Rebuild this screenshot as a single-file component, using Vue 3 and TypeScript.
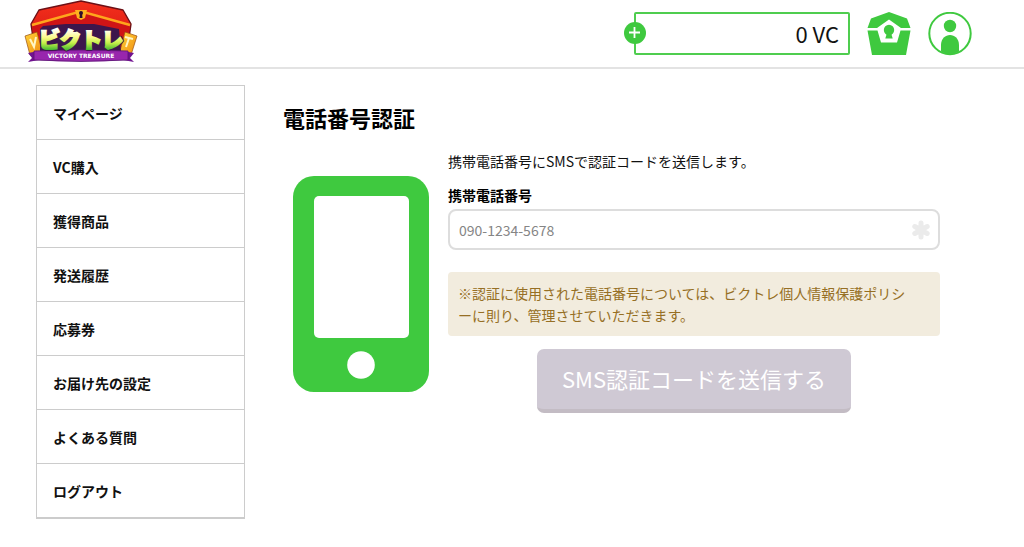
<script setup lang="ts">
import { ref } from 'vue'

interface MenuItem {
  label: string
  href: string
}

const menu: MenuItem[] = [
  { label: 'マイページ', href: '#mypage' },
  { label: 'VC購入', href: '#purchase' },
  { label: '獲得商品', href: '#items' },
  { label: '発送履歴', href: '#shipping' },
  { label: '応募券', href: '#tickets' },
  { label: 'お届け先の設定', href: '#address' },
  { label: 'よくある質問', href: '#faq' },
  { label: 'ログアウト', href: '#logout' },
]

const balance = ref<number>(0)
const phone = ref<string>('')
</script>

<template>
  <div class="app">
    <header class="header">
      <a class="logo" href="#top" aria-label="ビクトレ">
        <svg width="114" height="64" viewBox="0 0 114 64">
          <defs>
            <linearGradient id="lid" x1="0" y1="0" x2="0" y2="1">
              <stop offset="0" stop-color="#f5301c" />
              <stop offset="1" stop-color="#d01412" />
            </linearGradient>
            <linearGradient id="letters" gradientUnits="userSpaceOnUse" x1="0" y1="27" x2="0" y2="50">
              <stop offset="0.1" stop-color="#ffffff" />
              <stop offset="0.45" stop-color="#fbfa8a" />
              <stop offset="0.7" stop-color="#c2ee48" />
              <stop offset="1" stop-color="#45b832" />
            </linearGradient>
            <linearGradient id="card" x1="0" y1="0" x2="1" y2="1">
              <stop offset="0" stop-color="#ffd33a" />
              <stop offset="1" stop-color="#f08c10" />
            </linearGradient>
          </defs>
          <path d="M7 24 L15 10 L57 1 L99 10 L107 24 L103 52 L11 52 Z" fill="url(#lid)" stroke="#6d1016" stroke-width="1.4" stroke-linejoin="round" />
          <path d="M8 25 L50 12 L57 10 L64 12 L106 25 L103 52 L11 52 Z" fill="#cf1416" />
          <path d="M8 25 L51 13 L63 13 L106 25" fill="none" stroke="#ffa51c" stroke-width="2.4" />
          <path d="M51 10 H63 L61 18 L57 20 L53 18 Z" fill="#ffb21e" />
          <circle cx="57" cy="13" r="2" fill="#31102d" />
          <path d="M56 13 H58 L58.5 18 H55.5 Z" fill="#31102d" />
          <path d="M1 36 L13 32 L18 51 L6 55 Z" fill="url(#card)" stroke="#9a4e10" stroke-width="0.7" />
          <path d="M101 32 L113 36 L107 55 L96 51 Z" fill="url(#card)" stroke="#9a4e10" stroke-width="0.7" />
          <path d="M6 39 L10 47 L12 37" fill="none" stroke="#fff6c4" stroke-width="2" />
          <path d="M101 37 L109 39 M105 38 L102 47" fill="none" stroke="#fff6c4" stroke-width="2" />
          <path d="M16 29 L19 26 L42 24 H70 L95 29 L97 52 H16 Z" fill="#3d164c" />
          <path d="M4 53 L15 51 V60 L4 62 L8 58 Z M110 53 L99 51 V60 L110 62 L106 58 Z" fill="#711290" />
          <path d="M10 51 Q57 49 104 51 V60 Q57 63 10 60 Z" fill="#9826ad" stroke="#5a1474" stroke-width="0.8" />
          <text x="57" y="47" text-anchor="middle" class="logo-name logo-outline">ビクトレ</text>
          <text x="57" y="47" text-anchor="middle" class="logo-name logo-fill">ビクトレ</text>
          <text x="57" y="58" text-anchor="middle" class="logo-sub">VICTORY TREASURE</text>
        </svg>
      </a>
      <div class="tools">
        <div class="balance">
          <button class="plus" type="button" aria-label="VC購入">
            <svg width="22" height="22" viewBox="0 0 22 22">
              <circle cx="11" cy="11" r="11" fill="#3fc93f" />
              <path d="M5 10.500 H16 M10.500 5 V16" stroke="#fff" stroke-width="1.800" />
            </svg>
          </button>
          <span>{{ balance }} VC</span>
        </div>
        <a class="tool" href="#items" aria-label="獲得商品">
          <svg width="44" height="44" viewBox="0 0 44 44" fill="#3fc93f">
            <path d="M22 0 L40 6.5 L43.5 16 H34 L22 7.5 L10 16 H0.5 L4 6.5 Z" />
            <path d="M0.5 18.500 H10.500 L14 30.500 H30 L33.500 18.500 H43.500 L39 43 H5 Z" />
            <circle cx="22" cy="18" r="5.200" />
            <path d="M20 21 H24 L25.700 26.500 H18.300 Z" />
          </svg>
        </a>
        <a class="tool" href="#mypage" aria-label="マイページ">
          <svg width="44" height="44" viewBox="0 0 44 44" fill="#3fc93f">
            <circle cx="22" cy="21.500" r="20.700" fill="none" stroke="#3fc93f" stroke-width="2" />
            <circle cx="22" cy="14" r="6.200" />
            <path d="M13 39.500 V33 C13 19.500 31 19.500 31 33 V39.500 Q22 45 13 39.500 Z" />
          </svg>
        </a>
      </div>
    </header>

    <div class="page">
      <nav class="menu">
        <ul>
          <li v-for="item in menu" :key="item.href">
            <a :href="item.href">{{ item.label }}</a>
          </li>
        </ul>
      </nav>

      <main class="main">
        <h1>電話番号認証</h1>
        <div class="verify">
          <svg class="phone" width="136" height="216" viewBox="0 0 136 216" aria-hidden="true">
            <rect width="136" height="216" rx="21" fill="#3fc93f" />
            <rect x="21" y="20" width="95" height="142" rx="5" fill="#fff" />
            <circle cx="68" cy="189" r="13.800" fill="#fff" />
          </svg>
          <form class="form" @submit.prevent>
            <p class="lead">携帯電話番号にSMSで認証コードを送信します。</p>
            <label for="phone">携帯電話番号</label>
            <div class="field">
              <input id="phone" v-model="phone" type="tel" placeholder="090-1234-5678" />
              <svg class="required" width="18" height="20" viewBox="0 0 18 20" aria-hidden="true">
                <path d="M9 3 V17 M2.800 6.500 L15.200 13.500 M15.200 6.500 L2.800 13.500" stroke="#ebebeb" stroke-width="5" stroke-linecap="round" />
                <circle cx="9" cy="10" r="5" fill="#ebebeb" />
              </svg>
            </div>
            <p class="note">※認証に使用された電話番号については、ビクトレ個人情報保護ポリシ<br />ーに則り、管理させていただきます。</p>
            <button class="submit" type="submit">SMS認証コードを送信する</button>
          </form>
        </div>
      </main>
    </div>
  </div>
</template>

<style>
body {
  margin: 0;
  background: #fff;
}
</style>

<style scoped>
.app {
  font-family: "Noto Sans CJK JP", "Noto Sans", sans-serif;
  font-size: 14px;
  line-height: 22px;
  color: #111;
}

.header {
  display: flex;
  justify-content: space-between;
  align-items: flex-start;
  height: 67px;
  padding: 0 52px 0 24px;
  border-bottom: 2px solid #e3e3e3;
}

.logo svg,
.tool svg,
.plus svg {
  display: block;
}

.logo-name {
  font-size: 21px;
  font-weight: 900;
}

.logo-outline {
  fill: #3d164c;
  stroke: #3d164c;
  stroke-width: 4px;
  stroke-linejoin: round;
}

.logo-fill {
  fill: url(#letters);
  stroke: url(#letters);
  stroke-width: 2px;
}

.logo-sub {
  font-family: "DejaVu Sans", sans-serif;
  font-size: 6px;
  font-weight: 700;
  fill: #fff;
}

.tools {
  display: flex;
  gap: 17px;
  padding-top: 12px;
}

.balance {
  position: relative;
  box-sizing: border-box;
  width: 216px;
  height: 43px;
  padding-right: 9px;
  border: 2px solid #4fcd4f;
  border-radius: 2px;
  font-size: 22px;
  line-height: 39px;
  text-align: right;
}

.plus {
  position: absolute;
  top: 8px;
  left: -12px;
  padding: 0;
  border: 0;
  background: none;
}

.page {
  display: flex;
  align-items: flex-start;
  gap: 38px;
  padding: 16px 84px 28px 36px;
}

.menu {
  flex: none;
  box-sizing: border-box;
  width: 209px;
  border: 1px solid #ccc;
}

.menu ul {
  margin: 0;
  padding: 0;
  list-style: none;
}

.menu li {
  border-bottom: 1px solid #ccc;
}

.menu a {
  display: block;
  padding: 16px 16px 15px;
  color: #111;
  font-weight: 700;
  text-decoration: none;
}

.main {
  flex: 1;
  min-width: 0;
}

h1 {
  margin: 16px 0 17px;
  font-size: 22px;
  line-height: 32px;
  font-weight: 700;
  color: #000;
}

.verify {
  display: flex;
  align-items: flex-start;
  gap: 19px;
  padding-left: 10px;
}

.phone {
  flex: none;
  margin-top: 26px;
}

.form {
  flex: 1;
  min-width: 0;
}

.lead {
  margin: 0 0 12px;
}

label {
  display: block;
  margin-bottom: 3px;
  font-weight: 700;
  color: #000;
}

.field {
  position: relative;
}

input {
  display: block;
  box-sizing: border-box;
  width: 100%;
  height: 41px;
  padding: 0 36px 0 9px;
  border: 2px solid #ddd;
  border-radius: 8px;
  background: #fff;
  font: inherit;
  color: #111;
}

input::placeholder {
  color: #858585;
}

.required {
  position: absolute;
  top: 11px;
  right: 10px;
}

.note {
  margin: 22px 0 13px;
  padding: 10px;
  border-radius: 4px;
  background: #f2ecde;
  color: #966f24;
}

.submit {
  display: block;
  box-sizing: border-box;
  width: 314px;
  height: 64px;
  margin: 0 auto;
  padding: 0 0 3px;
  border: 0;
  border-bottom: 4px solid #c3bcc4;
  border-radius: 7px;
  background: #cfc9d4;
  color: #fff;
  font-family: inherit;
  font-size: 22px;
  line-height: 32px;
}
</style>
